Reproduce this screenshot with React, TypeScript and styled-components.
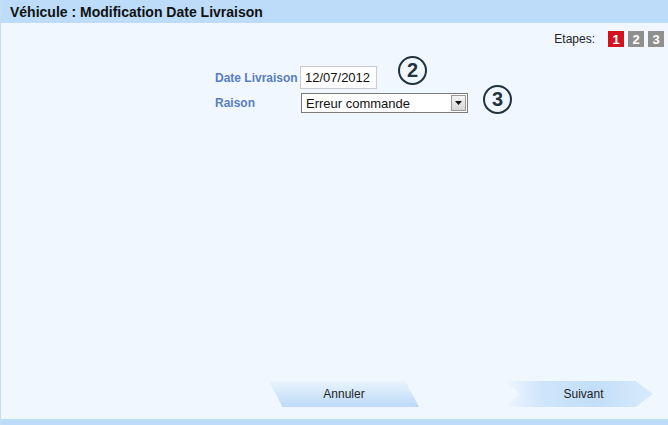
import React from "react";
import styled, { createGlobalStyle } from "styled-components";

const Global = createGlobalStyle`
  html, body { margin: 0; padding: 0; }
  body { font-family: "Liberation Sans", Arial, sans-serif; background: #eef6fe; }
`;

const Window = styled.div`
  width: 668px;
  height: 425px;
  display: flex;
  flex-direction: column;
  background: #f0f7fe;
  border-left: 1px solid #c9dcec;
  box-sizing: border-box;
`;

const TitleBar = styled.div`
  height: 23px;
  background: #bcdcfa;
  display: flex;
  align-items: center;
  padding-left: 9px;
  font-weight: bold;
  font-size: 14px;
  color: #111;
`;

const Content = styled.div`
  flex: 1;
  display: flex;
  flex-direction: column;
`;

const StepsRow = styled.div`
  display: flex;
  justify-content: flex-end;
  align-items: center;
  gap: 4px;
  padding: 8px 4px 0 0;
  font-size: 12px;
  color: #222;
`;

const StepsLabel = styled.span`
  margin-right: 9px;
`;

const Step = styled.span<{ $active?: boolean }>`
  width: 16px;
  height: 16px;
  display: flex;
  align-items: center;
  justify-content: center;
  font-weight: bold;
  font-size: 13px;
  color: #fff;
  background: ${(p) => (p.$active ? "#d3141f" : "#8f8f8f")};
`;

const Form = styled.div`
  display: flex;
  flex-direction: column;
  gap: 4px;
  margin: 19px 0 0 214px;
`;

const FormRow = styled.div`
  display: flex;
  align-items: center;
`;

const Label = styled.label`
  width: 85px;
  font-weight: bold;
  font-size: 12px;
  color: #5a7ebf;
`;

const DateInput = styled.div`
  width: 77px;
  height: 23px;
  box-sizing: border-box;
  border: 1px solid #c8ccd2;
  background: #fff;
  font-size: 13px;
  color: #111;
  display: flex;
  align-items: center;
  padding-left: 4px;
`;

const Select = styled.div`
  width: 167px;
  height: 20px;
  margin-left: 1px;
  box-sizing: border-box;
  border: 1px solid #7a7a7a;
  background: #fff;
  font-size: 13px;
  color: #111;
  display: flex;
  align-items: center;
  padding-left: 4px;
  justify-content: space-between;
`;

const SelectArrow = styled.span`
  width: 15px;
  height: 16px;
  margin-right: 1px;
  box-sizing: border-box;
  border: 1px solid #999;
  background: linear-gradient(#f4f4f4, #d6d6d6);
  display: flex;
  align-items: center;
  justify-content: center;
`;

const Circle = styled.div<{ $shift: number; $up: number }>`
  width: 29px;
  height: 29px;
  margin: -8px 0 -8px ${(p) => p.$shift}px;
  box-sizing: border-box;
  border: 2.5px solid #21333f;
  border-radius: 50%;
  display: flex;
  align-items: center;
  justify-content: center;
  font-weight: bold;
  font-size: 20px;
  color: #21333f;
  transform: translateY(${(p) => -p.$up}px);
`;

const Spacer = styled.div`
  flex: 1;
`;

const ButtonsRow = styled.div`
  display: flex;
  padding: 0 0 12px 268px;
  gap: 87px;
`;

const Button = styled.div<{ $shape: "slant" | "arrow" }>`
  width: ${(p) => (p.$shape === "slant" ? 150 : 147)}px;
  height: 26px;
  display: flex;
  align-items: center;
  justify-content: center;
  font-size: 12px;
  color: #222;
  clip-path: ${(p) =>
    p.$shape === "slant"
      ? "polygon(0 0, 91% 0, 100% 100%, 9% 100%)"
      : "polygon(0 0, 88% 0, 100% 50%, 88% 100%, 0 100%, 9% 50%)"};
  background: ${(p) =>
    p.$shape === "slant"
      ? "linear-gradient(#eaf4fe, #bcdaf7)"
      : "linear-gradient(90deg, #eef6fe 0%, #cfe5fb 25%, #c2def9 60%, #d8eafc 100%)"};
  padding-left: ${(p) => (p.$shape === "slant" ? 0 : 8)}px;
  box-sizing: border-box;
`;

const BottomBar = styled.div`
  height: 6px;
  background: #bcdcfa;
`;

export default function App() {
  return (
    <>
      <Global />
      <Window>
        <TitleBar>Véhicule : Modification Date Livraison</TitleBar>
        <Content>
          <StepsRow>
            <StepsLabel>Etapes:</StepsLabel>
            <Step $active>1</Step>
            <Step>2</Step>
            <Step>3</Step>
          </StepsRow>
          <Form>
            <FormRow>
              <Label>Date Livraison</Label>
              <DateInput>12/07/2012</DateInput>
              <Circle $shift={21} $up={7}>2</Circle>
            </FormRow>
            <FormRow>
              <Label>Raison</Label>
              <Select>
                Erreur commande
                <SelectArrow>
                  <svg width="7" height="4" viewBox="0 0 7 4">
                    <path d="M0 0 L7 0 L3.5 4 Z" fill="#111" />
                  </svg>
                </SelectArrow>
              </Select>
              <Circle $shift={15} $up={4}>3</Circle>
            </FormRow>
          </Form>
          <Spacer />
          <ButtonsRow>
            <Button $shape="slant">Annuler</Button>
            <Button $shape="arrow">Suivant</Button>
          </ButtonsRow>
        </Content>
        <BottomBar />
      </Window>
    </>
  );
}
